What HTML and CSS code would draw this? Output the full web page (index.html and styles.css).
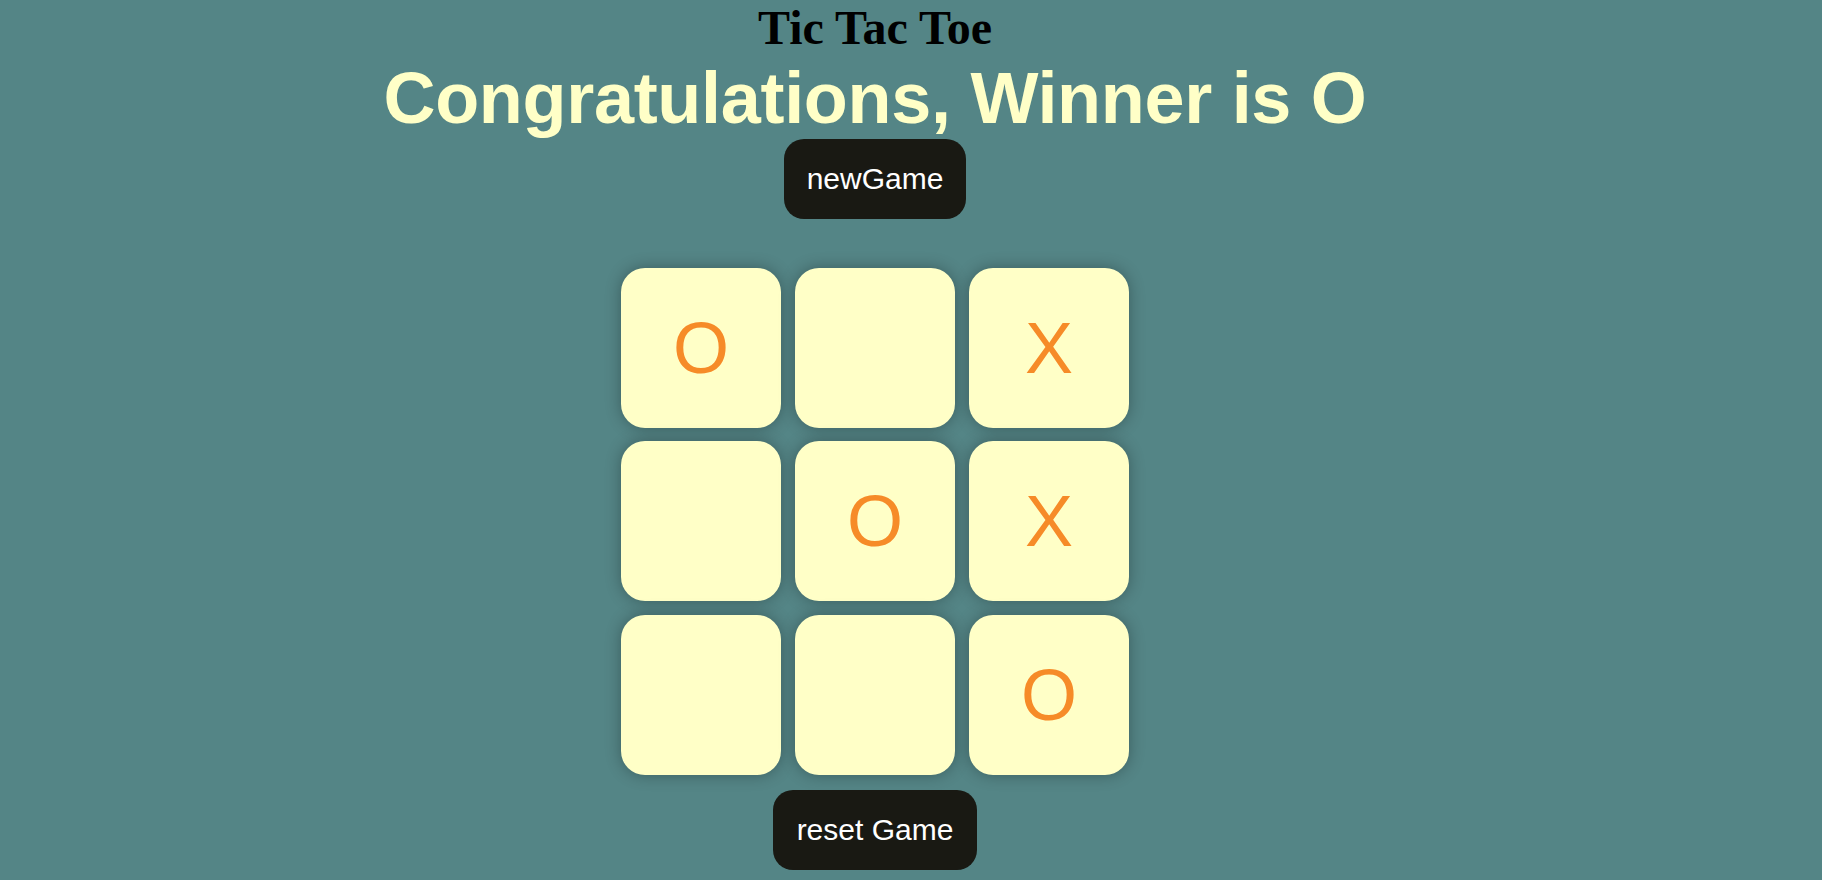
FILE: index.html
```html
<!DOCTYPE html>
<html lang="en">
<head>
<meta charset="UTF-8">
<title>Tic Tac Toe</title>
<link rel="stylesheet" href="styles.css">
</head>
<body>
<main class="page">
  <h1 class="title">Tic Tac Toe</h1>
  <div class="msg-container">
    <p class="msg">Congratulations, Winner is O</p>
    <button class="btn new-btn">newGame</button>
  </div>
  <div class="game">
    <button class="box">O</button>
    <button class="box"></button>
    <button class="box">X</button>
    <button class="box"></button>
    <button class="box">O</button>
    <button class="box">X</button>
    <button class="box"></button>
    <button class="box"></button>
    <button class="box">O</button>
  </div>
  <button class="btn reset-btn">reset Game</button>
</main>
</body>
</html>
```
FILE: styles.css
```css
html, body {
  margin: 0;
  padding: 0;
}
body {
  background-color: #548586;
  min-height: 880px;
}
.page {
  width: 1750px;
  display: flex;
  flex-direction: column;
  align-items: center;
}
.title {
  margin: 0;
  font-family: "Liberation Serif", "Times New Roman", serif;
  font-weight: bold;
  font-size: 48px;
  color: #000;
  line-height: normal;
}
.msg-container {
  display: flex;
  flex-direction: column;
  align-items: center;
  margin-top: 1px;
}
.msg {
  margin: 0;
  font-family: "Liberation Sans", Arial, sans-serif;
  font-weight: bold;
  font-size: 72px;
  letter-spacing: -0.3px;
  line-height: 81px;
  padding-top: 2px;
  color: #ffffc7;
}
.btn {
  font-family: "Liberation Sans", Arial, sans-serif;
  font-size: 30px;
  color: #ffffff;
  background-color: #191913;
  border: none;
  border-radius: 20px;
  padding: 23px 23px;
  line-height: normal;
}
.game {
  margin-top: 49px;
  display: grid;
  grid-template-columns: repeat(3, 160px);
  grid-template-rows: repeat(3, 160px);
  column-gap: 14px;
  row-gap: 13.3px;
}
.box {
  width: 160px;
  height: 160px;
  border: none;
  border-radius: 24px;
  background-color: #ffffc7;
  box-shadow: 0 0 1rem rgba(0, 0, 0, 0.3);
  font-family: "Liberation Sans", Arial, sans-serif;
  font-size: 72px;
  color: #f68b28;
  padding: 0;
}
.reset-btn {
  margin-top: 15px;
  padding: 23px 24px;
}
```
